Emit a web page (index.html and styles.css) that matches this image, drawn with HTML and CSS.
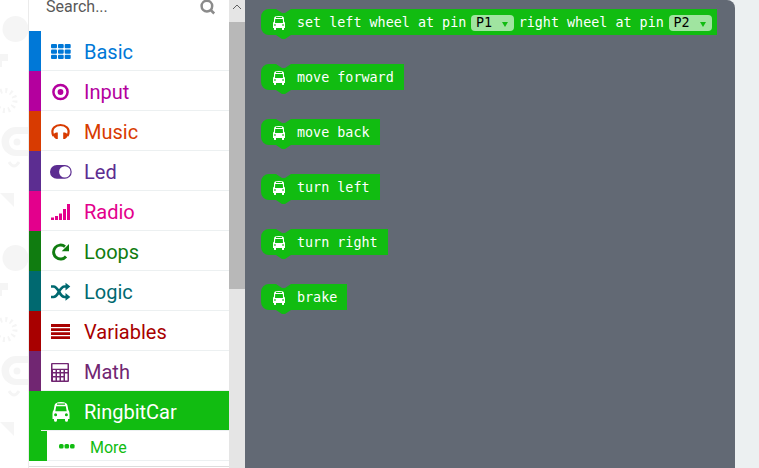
FILE: index.html
```html
<!DOCTYPE html>
<html lang="en">
<head>
<meta charset="utf-8">
<title>Blocks editor</title>
<link rel="stylesheet" href="styles.css">
</head>
<body>
<svg class="defs" width="0" height="0">
  <symbol id="bus" viewBox="0 0 18 20">
    <path fill="currentColor" fill-rule="evenodd" d="M4 1.3Q5.5 0 9 0T14 1.3Q15.2 1.8 15.5 3.5L16.3 8Q17.5 9.3 17.5 11.5V17H16V18.2Q16 19.7 14.5 19.7T13 18.2V17H5V18.2Q5 19.7 3.5 19.7T2 18.2V17H.5V11.5Q.5 9.3 1.7 8L2.5 3.5Q2.8 1.8 4 1.3ZM5 1.5V2.7H13V1.5ZM4.2 4.2L3.3 9.2H14.7L13.8 4.2ZM3.6 11.3A1.5 1.5 0 1 0 3.6 14.3A1.5 1.5 0 1 0 3.6 11.3ZM14.4 11.3A1.5 1.5 0 1 0 14.4 14.3A1.5 1.5 0 1 0 14.4 11.3Z"/>
  </symbol>
  <symbol id="bus-small" viewBox="0 0 12 14">
    <path fill="#fff" fill-rule="evenodd" d="M2 .5Q3 0 6 0T10 .5Q11 1 11 3V5.500Q12 6 12 7.500V12H11V13.500Q11 14 10 14T9 13.500V12H3V13.500Q3 14 2 14T1 13.500V12H0V7.500Q0 6 1 5.500V3Q1 1 2 .5ZM3 1V2H9V1ZM2.200 3L2 7H10L9.800 3ZM1.200 8.300V9.800H2.700V8.300ZM9.300 8.300V9.800H10.800V8.300Z"/>
  </symbol>
  <symbol id="cap" viewBox="0 0 30 30">
    <path fill="#11bc11" d="M0 8A8 8 0 0 1 8 0H15L21 4H24L30 0V26L24 30H21L15 26H8A8 8 0 0 1 0 18Z"/>
  </symbol>
  <symbol id="doodles" viewBox="0 0 29 229">
    <circle cx="15.500" cy="29" r="13"/>
    <path d="M0 54H8V61H2V67H0Z"/>
    <circle cx="5" cy="100.500" r="10" fill="none" stroke="#f5f5f5" stroke-width="5" stroke-dasharray="2 3.236"/>
    <path fill-rule="evenodd" d="M29 127H16A14.500 14.500 0 0 0 16 156H29V150H17A8 8 0 0 1 17 134H29Z"/>
    <circle cx="17" cy="142" r="3.500"/>
    <path d="M9 162Q14 170 19 162" fill="none" stroke="#f5f5f5" stroke-width="3"/>
    <path d="M0 193H14V207Z"/>
  </symbol>
</svg>

<div class="backdrop">
  <svg width="29" height="229" fill="#f5f5f5"><use href="#doodles"/></svg>
  <svg width="29" height="229" fill="#f5f5f5"><use href="#doodles"/></svg>
</div>

<nav class="toolbox">
  <div class="search">
    <span>Search...</span>
    <svg width="16" height="16" viewBox="0 0 16 16" fill="none" stroke="#8b8b8b" stroke-width="2.500"><circle cx="6.900" cy="6.100" r="5.300"/><path d="M10.700 10L14.200 13.500"/></svg>
  </div>
  <div class="row basic"><div class="item">
    <svg class="icon" viewBox="0 0 24 24" fill="currentColor"><g id="r"><rect x="2" y="4" width="6" height="4.300" rx="1"/><rect x="9" y="4" width="5.700" height="4.300" rx="1"/><rect x="15.700" y="4" width="6" height="4.300" rx="1"/></g><use href="#r" y="5.400"/><use href="#r" y="10.800"/></svg>
    <span>Basic</span></div></div>
  <div class="row input"><div class="item">
    <svg class="icon" viewBox="0 0 24 24"><circle cx="11.500" cy="12" r="7.100" fill="none" stroke="currentColor" stroke-width="2.500"/><circle cx="11.500" cy="12" r="2.900" fill="currentColor"/></svg>
    <span>Input</span></div></div>
  <div class="row music"><div class="item">
    <svg class="icon" viewBox="0 0 24 24" fill="currentColor"><path d="M4.500 16Q2 10.500 5 7.500Q7.500 5 11.500 5T18 7.500Q21 10.500 18.500 16" fill="none" stroke="currentColor" stroke-width="2.200"/><path d="M3.500 14.500L7 12.500H8.800V19H7L5 17.200ZM19.500 14.500L16 12.500H14.200V19H16L18 17.200Z"/></svg>
    <span>Music</span></div></div>
  <div class="row led"><div class="item">
    <svg class="icon" viewBox="0 0 24 24"><rect x="1" y="5" width="21.700" height="13.800" rx="6.900" fill="currentColor"/><circle cx="15.800" cy="11.900" r="5.700" fill="#fff"/></svg>
    <span>Led</span></div></div>
  <div class="row radio"><div class="item">
    <svg class="icon" viewBox="0 0 24 24" fill="currentColor"><path d="M2 17.500H5V20H2ZM6 16H9V20H6ZM10 13.500H13V20H10ZM14 9H17V20H14ZM18 4H21V20H18Z"/></svg>
    <span>Radio</span></div></div>
  <div class="row loops"><div class="item">
    <svg class="icon" viewBox="0 0 24 24"><path d="M17 16.500A7 7 0 1 1 16 6.600" fill="none" stroke="currentColor" stroke-width="2.900"/><path d="M20 4V11.300H12.700Z" fill="currentColor"/></svg>
    <span>Loops</span></div></div>
  <div class="row logic"><div class="item">
    <svg class="icon" viewBox="0 0 24 24"><path d="M2 6.500H4.500C9.500 6.500 10.500 17 15.500 17H17M2 17H4.500C9.500 17 10.500 6.500 15.500 6.500H17" fill="none" stroke="currentColor" stroke-width="2.700"/><path d="M16.500 2.700L21.300 6.600L16.500 10.500ZM16.500 13L21.300 16.900L16.500 20.800Z" fill="currentColor"/></svg>
    <span>Logic</span></div></div>
  <div class="row variables"><div class="item">
    <svg class="icon" viewBox="0 0 24 24" fill="currentColor"><path d="M2 4H21V7H2ZM2 8.200H21V11H2ZM2 12.200H21V15H2ZM2 16.200H21V19H2Z"/></svg>
    <span>Variables</span></div></div>
  <div class="row math"><div class="item">
    <svg class="icon" viewBox="0 0 24 24"><path fill="currentColor" fill-rule="evenodd" d="M3 3H19Q20 3 20 4V21Q20 22 19 22H3Q2 22 2 21V4Q2 3 3 3ZM3.500 4.300V8.700H18.500V4.300ZM4 10V12H6.500V10ZM8 10V12H10.500V10ZM12 10V12H14.500V10ZM16 10V12H18.500V10ZM4 13.500V16H6.500V13.500ZM8 13.500V16H10.500V13.500ZM12 13.500V16H14.500V13.500ZM4 17.500V20.500H6.500V17.500ZM8 17.500V20.500H10.500V17.500ZM12 17.500V20.500H14.500V17.500ZM16 13.500V20.500H18.500V13.500Z"/></svg>
    <span>Math</span></div></div>
  <div class="row car"><div class="item">
    <svg class="icon bus"><use href="#bus"/></svg>
    <span>RingbitCar</span></div></div>
  <div class="row more"><div class="item">
    <svg class="dots" viewBox="0 0 16 5" fill="currentColor"><rect width="4.600" height="4.500" rx="1.500"/><rect x="5.500" width="4.600" height="4.500" rx="1.500"/><rect x="11" width="4.600" height="4.500" rx="1.500"/></svg>
    <span>More</span></div></div>
  <div class="divider"></div>
</nav>

<div class="scrollbar">
  <div class="arrow"><svg width="10" height="6" viewBox="0 0 10 6" fill="none" stroke="#606060"><path d="M1 5L5 1L9 5"/></svg></div>
  <div class="thumb"></div>
</div>

<main class="flyout">
  <div class="block"><div class="cap"><svg><use href="#cap"/></svg><svg class="mini"><use href="#bus-small"/></svg></div><div class="body wide"><span>set left wheel at pin</span><span class="field">P1<i></i></span><span>right wheel at pin</span><span class="field">P2<i></i></span></div></div>
  <div class="block"><div class="cap"><svg><use href="#cap"/></svg><svg class="mini"><use href="#bus-small"/></svg></div><div class="body">move forward</div></div>
  <div class="block"><div class="cap"><svg><use href="#cap"/></svg><svg class="mini"><use href="#bus-small"/></svg></div><div class="body">move back</div></div>
  <div class="block"><div class="cap"><svg><use href="#cap"/></svg><svg class="mini"><use href="#bus-small"/></svg></div><div class="body">turn left</div></div>
  <div class="block"><div class="cap"><svg><use href="#cap"/></svg><svg class="mini"><use href="#bus-small"/></svg></div><div class="body">turn right</div></div>
  <div class="block"><div class="cap"><svg><use href="#cap"/></svg><svg class="mini"><use href="#bus-small"/></svg></div><div class="body">brake</div></div>
</main>
</body>
</html>
```
FILE: styles.css
```css
* { box-sizing: border-box; }
body {
  margin: 0;
  width: 759px;
  height: 468px;
  overflow: hidden;
  display: flex;
  background: #ecf0f1;
  font-family: Roboto, sans-serif;
}
svg { display: block; flex: none; }
.defs { position: absolute; }
.backdrop { width: 29px; flex: none; background: #fff; border-right: 1px solid #ebebeb; overflow: hidden; }
.toolbox { width: 200px; flex: none; background: #fff; overflow: hidden; }
.search {
  height: 31px;
  display: flex;
  justify-content: space-between;
  padding: 0 13px 0 17px;
  font-size: 16px;
  line-height: 14px;
  color: #595959;
}
.row { height: 40px; padding-left: 12px; background: currentColor; }
.item {
  height: 40px;
  display: flex;
  align-items: center;
  background: #fff;
  border-bottom: 1px solid #ecf0f1;
  padding-left: 8px;
  font-size: 20px;
  line-height: 40px;
}
.item span { padding-top: 3px; }
.icon { width: 24px; height: 24px; margin: 3px 11px 0 0; }
.bus { width: 18px; height: 20px; margin: 2px 14px 0 3px; }
.basic { color: #0078d7; }
.input { color: #b4009e; }
.music { color: #d83b01; }
.led { color: #5c2d91; }
.radio { color: #e3008c; }
.loops { color: #107c10; }
.logic { color: #006970; }
.variables { color: #a80000; }
.math { color: #712672; }
.car { background: #11bc11; color: #fff; }
.car .item { background: #11bc11; }
.more { height: 30px; padding-left: 18px; color: #11bc11; }
.more .item { height: 30px; padding-left: 12px; font-size: 16px; line-height: 28px; }
.more .item span { padding-top: 5px; }
.dots { width: 16px; height: 5px; margin: 2px 15px 0 0; }
.divider { height: 6px; border-bottom: 1px solid #dcdcdc; }
.scrollbar { width: 16px; flex: none; background: #e5e5e5; }
.arrow { height: 22px; padding: 4px 0 0 3px; }
.thumb { height: 267px; background: #b8b8b8; }
.flyout {
  width: 490px;
  flex: none;
  padding: 9px 0 0 16px;
  background: #626974;
  border-radius: 0 8px 0 0;
  font: 13.4px/26px "DejaVu Sans Mono", monospace;
  color: #fff;
  white-space: nowrap;
}
.block { display: flex; align-items: flex-start; height: 30px; margin-bottom: 25px; }
.cap { display: grid; flex: none; }
.cap svg { grid-area: 1 / 1; width: 30px; height: 30px; }
.cap .mini { width: 12px; height: 14px; margin: 7px 0 0 12px; }
.body { height: 26px; padding: 1px 10px 0 6px; line-height: 26px; background: #11bc11; }
.wide { display: flex; align-items: center; padding-right: 5px; gap: 4.7px; }
.field {
  width: 43px;
  height: 16px;
  display: flex;
  align-items: center;
  justify-content: space-between;
  padding: 0 6px 0 5px;
  border-radius: 4px;
  background: #a0e4a0;
  color: #000;
}
.field i { border: 3px solid transparent; border-top: 5px solid #11bc11; border-bottom: 0; margin-top: 3px; }
```
